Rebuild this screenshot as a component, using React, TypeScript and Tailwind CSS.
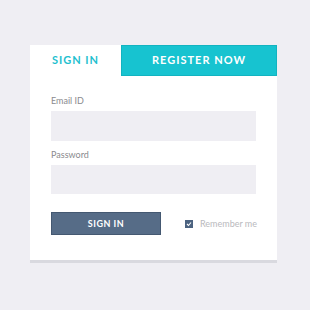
export default function App() {
  return (
    <div className="w-[310px] h-[310px] bg-[#efeef3] pt-[45px] pl-[30px] font-['Lato',sans-serif]">
      <div className="w-[247px] bg-white shadow-[0_3px_0_#d9d9df]">
        {/* Tabs */}
        <div className="flex h-[31px]">
          <div className="w-[91px] flex items-center justify-center text-[11px] font-bold tracking-[1px] text-[#1fbfcf]">
            SIGN IN
          </div>
          <div className="flex-1 flex items-center justify-center bg-[#17c3d0] border border-[#12b3c0] text-[11px] font-bold tracking-[1px] text-white">
            REGISTER NOW
          </div>
        </div>

        {/* Form */}
        <div className="px-[21px] pt-[19px] pb-[25px]">
          <div className="text-[9px] text-[#8a8a8e] leading-[12px]">Email ID</div>
          <div className="mt-[4px] h-[30px] w-[205px] bg-[#efeef3]" />
          <div className="mt-[8px] text-[9px] text-[#8a8a8e] leading-[12px]">Password</div>
          <div className="mt-[4px] h-[29px] w-[205px] bg-[#efeef3]" />
          <div className="mt-[18px] flex items-center">
            <button className="shrink-0 w-[110px] h-[23px] bg-[#566c87] border border-[#445871] text-white text-[9px] font-bold tracking-[0.5px]">
              SIGN IN
            </button>
            <div className="ml-[24px] flex items-center whitespace-nowrap">
              <div className="shrink-0 w-[8px] h-[8px] bg-[#4c6380] flex items-center justify-center">
                <svg width="6" height="6" viewBox="0 0 6 6">
                  <path d="M1 3 L2.5 4.5 L5 1.5" stroke="white" strokeWidth="1.1" fill="none" />
                </svg>
              </div>
              <span className="ml-[7px] text-[9px] text-[#b9b9bd]">Remember me</span>
            </div>
          </div>
        </div>
      </div>
    </div>
  );
}
